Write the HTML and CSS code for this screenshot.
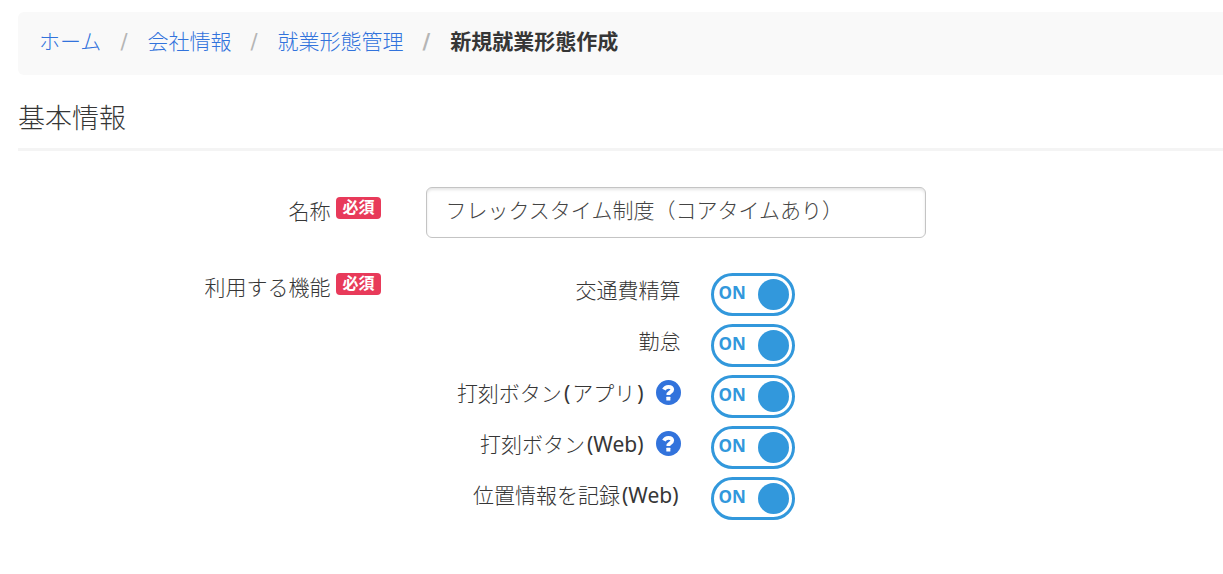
FILE: index.html
```html
<!DOCTYPE html>
<html lang="ja">
<head>
  <meta charset="UTF-8" />
  <meta name="viewport" content="width=device-width, initial-scale=1.0" />
  <title>新規就業形態作成</title>
  <link rel="stylesheet" href="styles.css">
</head>
<body>
  <nav>
    <ol class="breadcrumb">
      <li><a href="#">ホーム</a></li>
      <li><a href="#">会社情報</a></li>
      <li><a href="#">就業形態管理</a></li>
      <li class="active">新規就業形態作成</li>
    </ol>
  </nav>

  <h2>基本情報</h2>

  <form>
    <div class="form-row">
      <div class="form-label">
        <label for="name">名称</label>
        <span class="required">必須</span>
      </div>
      <input type="text" id="name" class="text-input" value="フレックスタイム制度（コアタイムあり）" />
    </div>

    <div class="form-row">
      <div class="form-label">
        <span>利用する機能</span>
        <span class="required">必須</span>
      </div>
      <div class="switches">
        <div class="switch-row">
          <label for="expense">交通費精算</label>
          <span class="switch"><input type="checkbox" id="expense" checked /><span class="switch-text">ON</span></span>
        </div>
        <div class="switch-row">
          <label for="attendance">勤怠</label>
          <span class="switch"><input type="checkbox" id="attendance" checked /><span class="switch-text">ON</span></span>
        </div>
        <div class="switch-row">
          <div class="switch-label">
            <label for="clockApp">打刻ボタン<span class="latin">(</span>アプリ<span class="latin">)</span></label>
            <svg class="help" viewBox="0 0 24 24" role="img" aria-label="ヘルプ">
              <circle cx="12" cy="12" r="12" />
              <path d="M7.6 9.2C8.5 7.3 9.9 6.5 11.9 6.5c2.4 0 3.7 1.1 3.7 2.7 0 2.5-3.8 2.4-3.8 5.1" />
              <rect x="9.9" y="16" width="3.9" height="3.7" rx="0.5" />
            </svg>
          </div>
          <span class="switch"><input type="checkbox" id="clockApp" checked /><span class="switch-text">ON</span></span>
        </div>
        <div class="switch-row">
          <div class="switch-label">
            <label for="clockWeb">打刻ボタン<span class="latin">(Web)</span></label>
            <svg class="help" viewBox="0 0 24 24" role="img" aria-label="ヘルプ">
              <circle cx="12" cy="12" r="12" />
              <path d="M7.6 9.2C8.5 7.3 9.9 6.5 11.9 6.5c2.4 0 3.7 1.1 3.7 2.7 0 2.5-3.8 2.4-3.8 5.1" />
              <rect x="9.9" y="16" width="3.9" height="3.7" rx="0.5" />
            </svg>
          </div>
          <span class="switch"><input type="checkbox" id="clockWeb" checked /><span class="switch-text">ON</span></span>
        </div>
        <div class="switch-row">
          <label for="location">位置情報を記録<span class="latin">(Web)</span></label>
          <span class="switch"><input type="checkbox" id="location" checked /><span class="switch-text">ON</span></span>
        </div>
      </div>
    </div>
  </form>
</body>
</html>
```
FILE: styles.css
```css
body {
  margin: 12px 0 0 18px;
  background-color: #fff;
  color: #363636;
  font-family: "DejaVu Sans", "Noto Sans CJK JP", sans-serif;
  font-size: 21px;
  font-weight: 300;
  line-height: 30px;
}
.breadcrumb {
  display: flex;
  flex-wrap: wrap;
  margin: 0;
  padding: 15px 21px 18px;
  list-style: none;
  background-color: #f9f9f9;
  border-radius: 6px 0 0 6px;
}
.breadcrumb li + li::before {
  content: "/";
  padding: 0 20px 0 19px;
  color: #b5b5b5;
  font-weight: 400;
}
.breadcrumb a {
  color: #3273dc;
  text-decoration: none;
}
.breadcrumb .active,
.breadcrumb .active::before {
  font-weight: 700;
}
h2 {
  margin: 24px 0 36px;
  padding-bottom: 9px;
  border-bottom: 3px solid #f4f4f4;
  font-size: 27px;
  font-weight: 300;
  line-height: 40px;
}
.form-row {
  display: grid;
  grid-template-columns: 5fr 11fr;
  column-gap: 45px;
  margin-bottom: 35px;
}
.form-label {
  display: flex;
  justify-content: flex-end;
  gap: 6px;
  padding-top: 10px;
}
.form-row + .form-row .form-label {
  padding-top: 0;
}
.required {
  height: 22px;
  padding: 0 6px;
  border-radius: 4px;
  background-color: #e83a5a;
  color: #fff;
  font-size: 16px;
  font-weight: 700;
  line-height: 22px;
}
.text-input {
  box-sizing: border-box;
  width: 100%;
  max-width: 500px;
  height: 51px;
  padding: 0 19px 7px;
  border: 1px solid #c4c4c4;
  border-radius: 6px;
  box-shadow: inset 0 2px 3px rgba(0, 0, 0, 0.1);
  color: #444;
  font: inherit;
}
.switches {
  display: flex;
  flex-direction: column;
  gap: 8px;
}
.switch-row {
  display: grid;
  grid-template-columns: 255px 84px;
  column-gap: 30px;
  text-align: right;
}
.switch-row > label,
.switch-label {
  padding-top: 3px;
}
.switch-label {
  display: flex;
  align-items: center;
  justify-content: flex-end;
  gap: 10px;
  height: 30px;
}
.latin {
  padding: 0 2px;
  font-family: "Noto Sans", sans-serif;
  font-weight: 400;
}
.help {
  width: 25px;
  height: 25px;
  margin-bottom: 2px;
  fill: #3273dc;
}
.help path {
  fill: none;
  stroke: #fff;
  stroke-width: 3.6;
}
.help rect {
  fill: #fff;
}
.switch {
  display: grid;
  height: 43px;
}
.switch input,
.switch-text {
  grid-area: 1 / 1;
}
.switch input {
  display: flex;
  align-items: center;
  justify-content: flex-end;
  box-sizing: border-box;
  width: 84px;
  height: 43px;
  margin: 0;
  padding-right: 3px;
  appearance: none;
  border: 3px solid #3298dc;
  border-radius: 22px;
  cursor: pointer;
}
.switch input::before {
  content: "";
  width: 31px;
  height: 31px;
  border-radius: 50%;
  background-color: #3298dc;
}
.switch input:not(:checked) {
  justify-content: flex-start;
  padding-left: 3px;
}
.switch input:not(:checked) + .switch-text {
  visibility: hidden;
}
.switch-text {
  justify-self: start;
  padding-left: 8px;
  color: #3298dc;
  font-family: "Open Sans", sans-serif;
  font-size: 17px;
  font-weight: 700;
  line-height: 40px;
  pointer-events: none;
}
```
